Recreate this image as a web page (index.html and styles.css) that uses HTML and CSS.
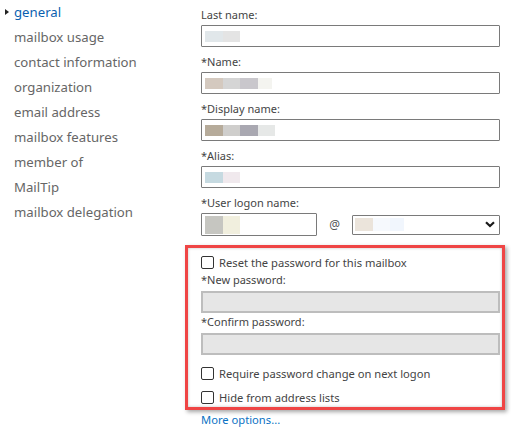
FILE: index.html
```html
<!DOCTYPE html>
<html lang="en">
<head>
<meta charset="utf-8">
<title>general</title>
<link rel="stylesheet" href="styles.css">
</head>
<body>
<div class="page">
  <nav class="nav">
    <div class="nav-item active">general</div>
    <div class="nav-item">mailbox usage</div>
    <div class="nav-item">contact information</div>
    <div class="nav-item">organization</div>
    <div class="nav-item">email address</div>
    <div class="nav-item">mailbox features</div>
    <div class="nav-item">member of</div>
    <div class="nav-item">MailTip</div>
    <div class="nav-item">mailbox delegation</div>
  </nav>
  <main class="form">
    <div class="group">
      <div class="label">Last name:</div>
      <div class="field f-last"><span class="blob"></span><span class="blob"></span></div>
    </div>
    <div class="group">
      <div class="label">*Name:</div>
      <div class="field f-name"><span class="blob"></span><span class="blob"></span><span class="blob"></span><span class="blob narrow"></span></div>
    </div>
    <div class="group">
      <div class="label">*Display name:</div>
      <div class="field f-display"><span class="blob"></span><span class="blob"></span><span class="blob"></span><span class="blob"></span></div>
    </div>
    <div class="group">
      <div class="label">*Alias:</div>
      <div class="field f-alias"><span class="blob"></span><span class="blob"></span></div>
    </div>
    <div class="group">
      <div class="label">*User logon name:</div>
      <div class="logon-row">
        <div class="field logon f-logon"><span class="blob"></span><span class="blob"></span></div>
        <span class="at">@</span>
        <div class="select f-domain">
          <span class="blob"></span><span class="blob"></span><span class="blob narrow"></span>
          <svg class="chevron" width="10" height="7" viewBox="0 0 10 7"><path d="M1 1.2 L5 5 L9 1.2" fill="none" stroke="#1a1a1a" stroke-width="2.2"/></svg>
        </div>
      </div>
    </div>
    <section class="highlight">
      <label class="check"><input type="checkbox" class="box"><span>Reset the password for this mailbox</span></label>
      <div class="plabel">*New password:</div>
      <div class="pfield"></div>
      <div class="plabel">*Confirm password:</div>
      <div class="pfield"></div>
      <label class="check require"><input type="checkbox" class="box"><span>Require password change on next logon</span></label>
      <label class="check hide"><input type="checkbox" class="box"><span>Hide from address lists</span></label>
    </section>
    <a class="more" href="#">More options...</a>
  </main>
</div>
</body>
</html>
```
FILE: styles.css
```css
* { box-sizing: border-box; }
html, body { margin: 0; padding: 0; background: #fff; }
body {
  font-family: "Segoe UI", "Noto Sans", "Open Sans", sans-serif;
  color: #333;
}
.page { display: flex; width: 511px; height: 431px; overflow: hidden; }

.nav { width: 201px; flex: none; padding-left: 14px; }
.nav-item {
  position: relative;
  font-size: 13.2px;
  line-height: 25px;
  height: 25px;
  color: #666;
  white-space: nowrap;
}
.nav-item.active { color: #0a5fb0; }
.nav-item.active::before {
  content: "";
  position: absolute;
  left: -9px;
  top: 9px;
  border-left: 4px solid #222;
  border-top: 3.5px solid transparent;
  border-bottom: 3.5px solid transparent;
}

.form { width: 299px; flex: none; }
.group { margin-top: 6px; }
.label {
  font-size: 11px;
  line-height: 17px;
  height: 17px;
  color: #444;
  white-space: nowrap;
}
.field {
  margin-top: 2px;
  height: 22px;
  border: 1px solid #7a7a7a;
  border-radius: 1px;
  display: flex;
  align-items: center;
  padding-left: 3px;
}
.blob { display: block; width: 17.5px; height: 11px; flex: none; }
.blob.narrow { width: 14px; }

.f-last .blob:nth-child(1) { background: #e1e7ea; }
.f-last .blob:nth-child(2) { background: #e4e4e4; }
.f-name .blob:nth-child(1) { background: #d4c9bf; }
.f-name .blob:nth-child(2) { background: #d5d5d5; }
.f-name .blob:nth-child(3) { background: #c9c7cc; }
.f-name .blob:nth-child(4) { background: #f4f4f0; }
.f-display .blob:nth-child(1) { background: #b6ab9a; }
.f-display .blob:nth-child(2) { background: #cfcecc; }
.f-display .blob:nth-child(3) { background: #a9a8b1; }
.f-display .blob:nth-child(4) { background: #e6e8e7; }
.f-alias .blob:nth-child(1) { background: #c6dae1; }
.f-alias .blob:nth-child(2) { background: #f0e9ed; }
.f-logon .blob { height: 18px; }
.f-logon .blob:nth-child(1) { background: #c6c6c1; }
.f-logon .blob:nth-child(2) { background: #f1efde; }
.f-domain .blob { height: 13px; }
.f-domain .blob:nth-child(1) { background: #ebe4db; }
.f-domain .blob:nth-child(2) { background: #f6f9fd; }
.f-domain .blob:nth-child(3) { background: #f1f6fd; }

.logon-row { display: flex; align-items: center; margin-top: 2px; }
.logon-row .field { margin-top: 0; }
.logon { width: 117px; height: 23px; padding-left: 3px; }
.at {
  width: 35px;
  text-align: center;
  font-size: 12px;
  color: #555;
}
.select {
  width: 149px;
  height: 20px;
  border: 1px solid #7a7a7a;
  border-radius: 1px;
  display: flex;
  align-items: center;
  padding-left: 2px;
}
.chevron { margin-left: auto; margin-right: 4px; }

.highlight {
  margin-top: 9px;
  margin-left: -16px;
  width: 320px;
  border: 3px solid #ef4545;
  padding: 5px 2px 1px 13px;
  box-shadow: 2px 2px 4px rgba(0,0,0,0.35), inset 0 0 3px rgba(0,0,0,0.25);
}
.check {
  display: flex;
  align-items: center;
  height: 18px;
  font-size: 11.2px;
  color: #444;
  white-space: nowrap;
}
.box {
  appearance: none;
  -webkit-appearance: none;
  width: 13px;
  height: 13px;
  margin: 0 5px 0 0;
  border: 1px solid #333;
  border-radius: 2px;
  background: #fff;
  flex: none;
}
.plabel {
  font-size: 11px;
  line-height: 18px;
  height: 18px;
  color: #444;
}
.pfield {
  height: 22px;
  margin-top: 2px;
  background: #e6e6e6;
  border: 2px solid #bdbdbd;
}
.pfield + .plabel { margin-top: 0; }
.check.require { margin-top: 9px; }
.check.hide { margin-top: 6px; }

.more {
  display: block;
  margin-top: 1px;
  font-size: 11.2px;
  line-height: 18px;
  color: #0b72c4;
  text-decoration: none;
}
```
